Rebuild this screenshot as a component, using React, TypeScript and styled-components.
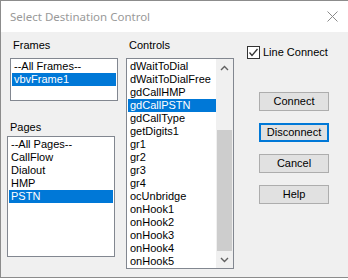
import styled, { createGlobalStyle } from 'styled-components'

const GlobalStyle = createGlobalStyle`
  html, body {
    margin: 0;
    padding: 0;
    background: #ffffff;
  }
  * {
    box-sizing: border-box;
  }
`

const Window = styled.div`
  width: 349px;
  height: 278px;
  border: 1px solid #8c8c8c;
  display: flex;
  flex-direction: column;
  overflow: hidden;
  font-family: 'Liberation Sans', Arial, sans-serif;
  font-size: 11px;
  color: #000;
`

const TitleBar = styled.div`
  height: 31px;
  flex: none;
  background: #ffffff;
  display: flex;
  align-items: center;
  justify-content: space-between;
  padding: 0 0 0 9px;
`

const TitleText = styled.span`
  font-family: 'Noto Sans', 'Open Sans', sans-serif;
  font-size: 11.5px;
  color: #999999;
`

const CloseButton = styled.div`
  width: 31px;
  display: flex;
  justify-content: center;
  align-items: center;
`

const Body = styled.div`
  flex: 1;
  background: #f0f0f0;
  display: flex;
  padding: 0 0 0 6px;
`

const Column = styled.div<{ $width: number; $gap: number }>`
  width: ${(p) => p.$width}px;
  margin-right: ${(p) => p.$gap}px;
  display: flex;
  flex-direction: column;
  flex: none;
`

const Label = styled.div<{ $top: number; $bottom: number; $left?: number }>`
  line-height: 13px;
  margin-top: ${(p) => p.$top}px;
  margin-bottom: ${(p) => p.$bottom}px;
  margin-left: ${(p) => p.$left ?? 0}px;
  padding-left: 3px;
`

const ListBox = styled.div<{ $height: number; $left?: number }>`
  width: 108px;
  height: ${(p) => p.$height}px;
  margin-left: ${(p) => p.$left ?? 0}px;
  background: #ffffff;
  border: 1px solid #828790;
  padding: 1px;
  display: flex;
  overflow: hidden;
`

const Items = styled.div`
  flex: 1;
  display: flex;
  flex-direction: column;
  min-width: 0;
`

const Item = styled.div<{ $selected?: boolean }>`
  height: 13px;
  line-height: 13px;
  padding-left: 2px;
  white-space: nowrap;
  background: ${(p) => (p.$selected ? '#0078d7' : 'transparent')};
  color: ${(p) => (p.$selected ? '#ffffff' : '#000000')};
`

const ScrollBar = styled.div`
  width: 17px;
  margin: -1px -1px -1px 0;
  background: #f0f0f0;
  display: flex;
  flex-direction: column;
  flex: none;
`

const ArrowBox = styled.div`
  height: 17px;
  display: flex;
  align-items: center;
  justify-content: center;
  flex: none;
`

const Track = styled.div`
  flex: 1;
  display: flex;
  flex-direction: column;
  justify-content: flex-end;
  padding: 0 1px 0 1px;
`

const Thumb = styled.div`
  height: 121px;
  background: #cdcdcd;
`

const CheckRow = styled.label`
  display: flex;
  align-items: center;
  gap: 3px;
  margin-top: 14px;
  line-height: 13px;
`

const CheckBox = styled.span`
  width: 13px;
  height: 13px;
  border: 1px solid #333333;
  background: #ffffff;
  display: flex;
  align-items: center;
  justify-content: center;
`

const Buttons = styled.div`
  display: flex;
  flex-direction: column;
  gap: 12px;
  margin-top: 33px;
  margin-left: 12px;
`

const Button = styled.div<{ $default?: boolean }>`
  width: 70px;
  height: 19px;
  background: #e1e1e1;
  border: ${(p) => (p.$default ? '2px solid #0078d7' : '1px solid #adadad')};
  display: flex;
  align-items: center;
  justify-content: center;
  line-height: 13px;
`

const frames = ['--All Frames--', 'vbvFrame1']
const pages = ['--All Pages--', 'CallFlow', 'Dialout', 'HMP', 'PSTN']
const controls = [
  'dWaitToDial',
  'dWaitToDialFree',
  'gdCallHMP',
  'gdCallPSTN',
  'gdCallType',
  'getDigits1',
  'gr1',
  'gr2',
  'gr3',
  'gr4',
  'ocUnbridge',
  'onHook1',
  'onHook2',
  'onHook3',
  'onHook4',
  'onHook5',
]

function Chevron({ up }: { up?: boolean }) {
  return (
    <svg width="9" height="6" viewBox="0 0 9 6">
      <polyline
        points={up ? '1,5 4.5,1.5 8,5' : '1,1 4.5,4.5 8,1'}
        fill="none"
        stroke="#606060"
        strokeWidth="1.4"
      />
    </svg>
  )
}

export default function App() {
  return (
    <>
      <GlobalStyle />
      <Window>
        <TitleBar>
          <TitleText>Select Destination Control</TitleText>
          <CloseButton>
            <svg width="11" height="11" viewBox="0 0 11 11">
              <path d="M0.5 0.5 L10.5 10.5 M10.5 0.5 L0.5 10.5" stroke="#8a8a8a" strokeWidth="1" />
            </svg>
          </CloseButton>
        </TitleBar>
        <Body>
          <Column $width={111} $gap={8}>
            <Label $top={7} $bottom={6} $left={3}>Frames</Label>
            <ListBox $height={43} $left={3}>
              <Items>
                {frames.map((f) => (
                  <Item key={f} $selected={f === 'vbvFrame1'}>{f}</Item>
                ))}
              </Items>
            </ListBox>
            <Label $top={20} $bottom={2}>Pages</Label>
            <ListBox $height={121}>
              <Items>
                {pages.map((p) => (
                  <Item key={p} $selected={p === 'PSTN'}>{p}</Item>
                ))}
              </Items>
            </ListBox>
          </Column>
          <Column $width={108} $gap={13}>
            <Label $top={7} $bottom={6}>Controls</Label>
            <ListBox $height={211}>
              <Items>
                {controls.map((c) => (
                  <Item key={c} $selected={c === 'gdCallPSTN'}>{c}</Item>
                ))}
              </Items>
              <ScrollBar>
                <ArrowBox>
                  <Chevron up />
                </ArrowBox>
                <Track>
                  <Thumb />
                </Track>
                <ArrowBox>
                  <Chevron />
                </ArrowBox>
              </ScrollBar>
            </ListBox>
          </Column>
          <Column $width={90} $gap={0}>
            <CheckRow>
              <CheckBox>
                <svg width="11" height="11" viewBox="0 0 11 11">
                  <polyline points="1.5,5.5 4,8.5 9.5,2" fill="none" stroke="#333333" strokeWidth="1.3" />
                </svg>
              </CheckBox>
              Line Connect
            </CheckRow>
            <Buttons>
              <Button>Connect</Button>
              <Button $default>Disconnect</Button>
              <Button>Cancel</Button>
              <Button>Help</Button>
            </Buttons>
          </Column>
        </Body>
      </Window>
    </>
  )
}
